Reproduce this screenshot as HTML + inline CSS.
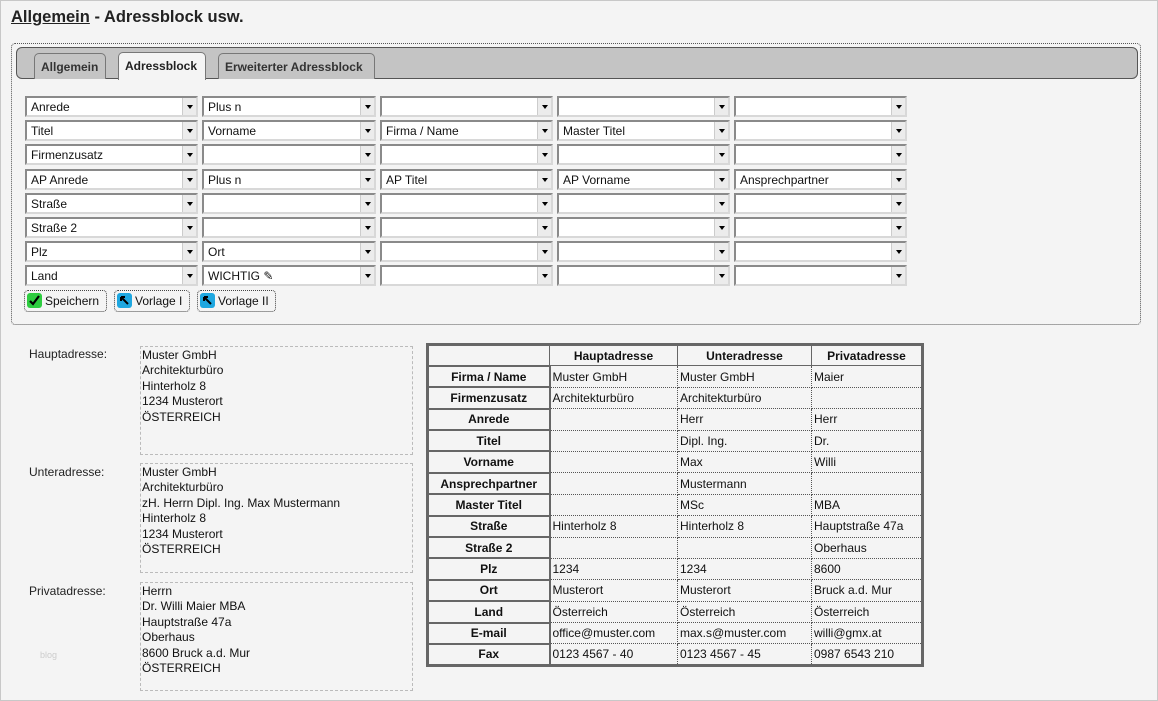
<!DOCTYPE html>
<html><head><meta charset="utf-8"><style>
*{box-sizing:border-box;margin:0;padding:0}
body{width:1158px;height:701px;background:#f4f4f4;font-family:"Liberation Sans",Arial,sans-serif;font-size:12px;color:#111;position:relative;overflow:hidden;box-shadow:inset 0 0 0 1px #c8c8c8}
.a{position:absolute}
h1{position:absolute;left:11px;top:8px;font-size:16.5px;font-weight:bold;color:#222}
h1 u{text-decoration:underline}
.fs{left:11px;top:43px;width:1130px;height:282px;border:1px dotted #555;border-radius:4px}
.bar{left:16px;top:47px;width:1122px;height:32px;background:#c4c4c4;border:1px solid #555;border-radius:6px}
.tab{position:absolute;top:53px;height:26px;border:1px solid #777;border-bottom:none;border-radius:5px 5px 0 0;background:#c4c4c4;font-weight:bold;font-size:12px;color:#333;padding:6px 6px 0;white-space:nowrap}
.tab.on{background:#f4f4f4;top:52px;height:28px;color:#222}
.sel{position:absolute;height:21px;background:#fff;border:2px solid;border-color:#8a8a8a #d8d8d8 #d8d8d8 #8a8a8a;font-size:12px;padding:2px 0 0 4px;white-space:nowrap}
.sel:after{content:"";position:absolute;right:0;top:0;width:13px;height:17px;background:#ececec;border-left:1px solid #ccc}
.sel i{position:absolute;right:3px;top:7px;width:0;height:0;border-left:3.5px solid transparent;border-right:3.5px solid transparent;border-top:4px solid #000;z-index:1}
.btn{position:absolute;top:290px;height:22px;border:1px dotted #444;border-radius:4px;font-size:12px;padding:3px 3px 0 20px;white-space:nowrap}
.btn b{position:absolute;left:2px;top:2px;width:15px;height:15px;border-radius:3px}
.lbl{position:absolute;left:29px;font-size:12px;color:#222}
.ta{position:absolute;left:140px;width:273px;border:1px dashed #bbb;font-size:12px;line-height:15.4px;padding:1px 0 0 1px}
table{position:absolute;left:426px;top:343px;width:498px;border-collapse:collapse;border:3px solid #666;font-size:12px;background:#f4f4f4}
td,th{height:21.4px;padding:0 2px;border:1px dotted #555;text-align:left;font-weight:normal;white-space:nowrap}
th{font-weight:bold;text-align:center;border:1px solid #666}
tr td:first-child{font-weight:bold;text-align:center;border:2px solid #666}
</style></head><body>
<h1><u>Allgemein</u> - Adressblock usw.</h1>
<div class="a fs"></div>
<div class="a bar"></div>
<div class="tab" style="left:34px;width:72px">Allgemein</div>
<div class="tab on" style="left:118px;width:88px">Adressblock</div>
<div class="tab" style="left:218px;width:157px">Erweiterter Adressblock</div>

<div class="sel" style="left:25px;top:96px;width:173px">Anrede<i></i></div>
<div class="sel" style="left:202px;top:96px;width:174px">Plus n<i></i></div>
<div class="sel" style="left:380px;top:96px;width:173px"><i></i></div>
<div class="sel" style="left:557px;top:96px;width:173px"><i></i></div>
<div class="sel" style="left:734px;top:96px;width:173px"><i></i></div>

<div class="sel" style="left:25px;top:120px;width:173px">Titel<i></i></div>
<div class="sel" style="left:202px;top:120px;width:174px">Vorname<i></i></div>
<div class="sel" style="left:380px;top:120px;width:173px">Firma / Name<i></i></div>
<div class="sel" style="left:557px;top:120px;width:173px">Master Titel<i></i></div>
<div class="sel" style="left:734px;top:120px;width:173px"><i></i></div>

<div class="sel" style="left:25px;top:144px;width:173px">Firmenzusatz<i></i></div>
<div class="sel" style="left:202px;top:144px;width:174px"><i></i></div>
<div class="sel" style="left:380px;top:144px;width:173px"><i></i></div>
<div class="sel" style="left:557px;top:144px;width:173px"><i></i></div>
<div class="sel" style="left:734px;top:144px;width:173px"><i></i></div>

<div class="sel" style="left:25px;top:169px;width:173px">AP Anrede<i></i></div>
<div class="sel" style="left:202px;top:169px;width:174px">Plus n<i></i></div>
<div class="sel" style="left:380px;top:169px;width:173px">AP Titel<i></i></div>
<div class="sel" style="left:557px;top:169px;width:173px">AP Vorname<i></i></div>
<div class="sel" style="left:734px;top:169px;width:173px">Ansprechpartner<i></i></div>

<div class="sel" style="left:25px;top:193px;width:173px">Straße<i></i></div>
<div class="sel" style="left:202px;top:193px;width:174px"><i></i></div>
<div class="sel" style="left:380px;top:193px;width:173px"><i></i></div>
<div class="sel" style="left:557px;top:193px;width:173px"><i></i></div>
<div class="sel" style="left:734px;top:193px;width:173px"><i></i></div>

<div class="sel" style="left:25px;top:217px;width:173px">Straße 2<i></i></div>
<div class="sel" style="left:202px;top:217px;width:174px"><i></i></div>
<div class="sel" style="left:380px;top:217px;width:173px"><i></i></div>
<div class="sel" style="left:557px;top:217px;width:173px"><i></i></div>
<div class="sel" style="left:734px;top:217px;width:173px"><i></i></div>

<div class="sel" style="left:25px;top:241px;width:173px">Plz<i></i></div>
<div class="sel" style="left:202px;top:241px;width:174px">Ort<i></i></div>
<div class="sel" style="left:380px;top:241px;width:173px"><i></i></div>
<div class="sel" style="left:557px;top:241px;width:173px"><i></i></div>
<div class="sel" style="left:734px;top:241px;width:173px"><i></i></div>

<div class="sel" style="left:25px;top:265px;width:173px">Land<i></i></div>
<div class="sel" style="left:202px;top:265px;width:174px">WICHTIG ✎<i></i></div>
<div class="sel" style="left:380px;top:265px;width:173px"><i></i></div>
<div class="sel" style="left:557px;top:265px;width:173px"><i></i></div>
<div class="sel" style="left:734px;top:265px;width:173px"><i></i></div>

<div class="btn" style="left:24px;width:83px"><b style="background:#2ecc40"><svg width="15" height="15"><path d="M3 8l3 3 6-8" stroke="#000" stroke-width="2.2" fill="none"/></svg></b>Speichern</div>
<div class="btn" style="left:114px;width:76px"><b style="background:#1ea7e0"><svg width="15" height="15"><path d="M4 4l7 7M4 4h4M4 4v4" stroke="#000" stroke-width="2" fill="none"/></svg></b>Vorlage I</div>
<div class="btn" style="left:197px;width:79px"><b style="background:#1ea7e0"><svg width="15" height="15"><path d="M4 4l7 7M4 4h4M4 4v4" stroke="#000" stroke-width="2" fill="none"/></svg></b>Vorlage II</div>

<div class="lbl" style="top:347px">Hauptadresse:</div>
<div class="ta" style="top:346px;height:109px">Muster GmbH<br>Architekturbüro<br>Hinterholz 8<br>1234 Musterort<br>ÖSTERREICH</div>
<div class="lbl" style="top:465px">Unteradresse:</div>
<div class="ta" style="top:463px;height:110px">Muster GmbH<br>Architekturbüro<br>zH. Herrn Dipl. Ing. Max Mustermann<br>Hinterholz 8<br>1234 Musterort<br>ÖSTERREICH</div>
<div class="lbl" style="top:584px">Privatadresse:</div>
<div class="ta" style="top:582px;height:109px">Herrn<br>Dr. Willi Maier MBA<br>Hauptstraße 47a<br>Oberhaus<br>8600 Bruck a.d. Mur<br>ÖSTERREICH</div>
<div class="a" style="left:40px;top:650px;font-size:9px;color:#ccc">blog</div>

<table>
<tr><th style="width:122px"></th><th style="width:128px">Hauptadresse</th><th style="width:134px">Unteradresse</th><th>Privatadresse</th></tr>
<tr><td>Firma / Name</td><td>Muster GmbH</td><td>Muster GmbH</td><td>Maier</td></tr>
<tr><td>Firmenzusatz</td><td>Architekturbüro</td><td>Architekturbüro</td><td></td></tr>
<tr><td>Anrede</td><td></td><td>Herr</td><td>Herr</td></tr>
<tr><td>Titel</td><td></td><td>Dipl. Ing.</td><td>Dr.</td></tr>
<tr><td>Vorname</td><td></td><td>Max</td><td>Willi</td></tr>
<tr><td>Ansprechpartner</td><td></td><td>Mustermann</td><td></td></tr>
<tr><td>Master Titel</td><td></td><td>MSc</td><td>MBA</td></tr>
<tr><td>Straße</td><td>Hinterholz 8</td><td>Hinterholz 8</td><td>Hauptstraße 47a</td></tr>
<tr><td>Straße 2</td><td></td><td></td><td>Oberhaus</td></tr>
<tr><td>Plz</td><td>1234</td><td>1234</td><td>8600</td></tr>
<tr><td>Ort</td><td>Musterort</td><td>Musterort</td><td>Bruck a.d. Mur</td></tr>
<tr><td>Land</td><td>Österreich</td><td>Österreich</td><td>Österreich</td></tr>
<tr><td>E-mail</td><td>office@muster.com</td><td>max.s@muster.com</td><td>willi@gmx.at</td></tr>
<tr><td>Fax</td><td>0123 4567 - 40</td><td>0123 4567 - 45</td><td>0987 6543 210</td></tr>
</table>
</body></html>
